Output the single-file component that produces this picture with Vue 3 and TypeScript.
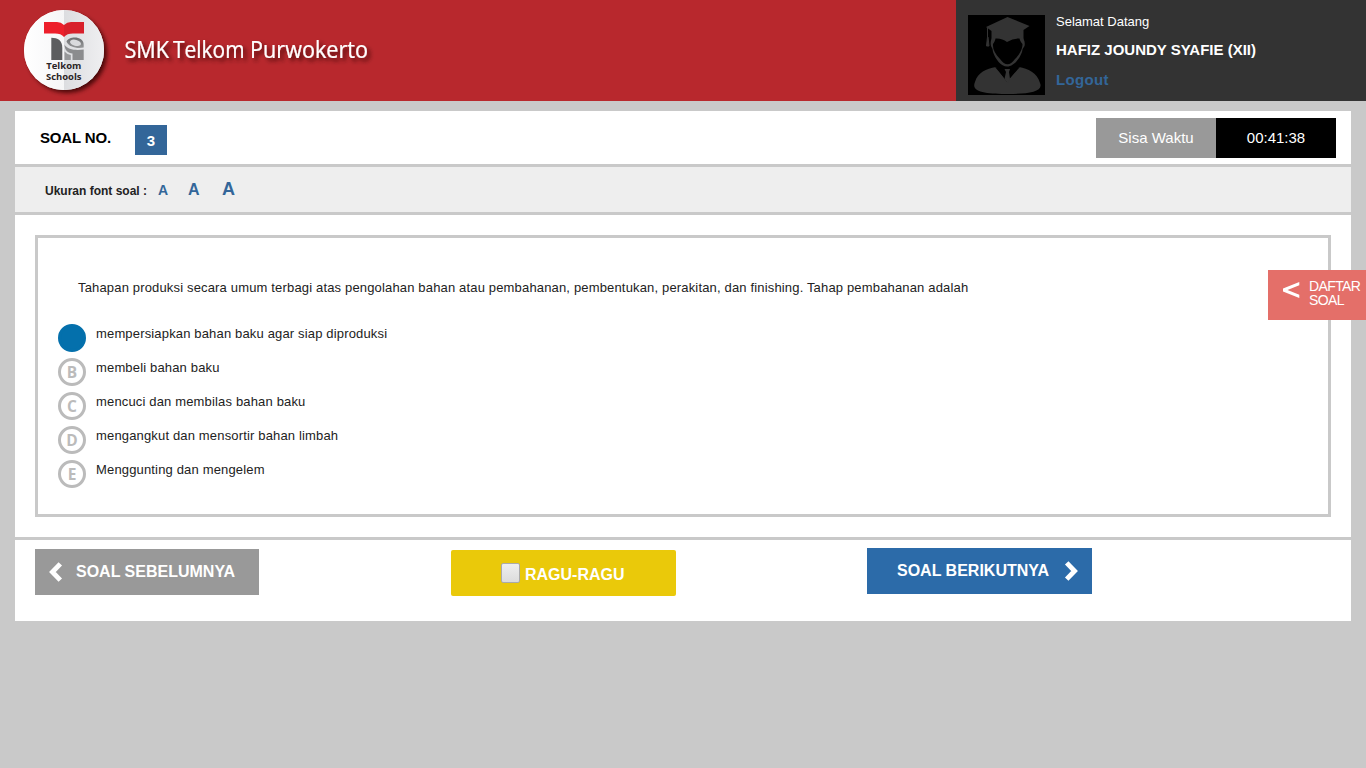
<script setup lang="ts">
import { ref } from 'vue'

interface Option {
  key: string
  text: string
}

const options: Option[] = [
  { key: 'A', text: 'mempersiapkan bahan baku agar siap diproduksi' },
  { key: 'B', text: 'membeli bahan baku' },
  { key: 'C', text: 'mencuci dan membilas bahan baku' },
  { key: 'D', text: 'mengangkut dan mensortir bahan limbah' },
  { key: 'E', text: 'Menggunting dan mengelem' },
]
const selected = ref('A')
const doubtful = ref(false)
</script>

<template>
  <div class="page">
    <header class="header">
      <svg class="brand" width="400" height="101" viewBox="0 0 400 101">
        <defs>
          <filter id="soft" x="-20%" y="-20%" width="150%" height="160%">
            <feDropShadow dx="3" dy="3" stdDeviation="2" flood-color="#300" flood-opacity=".8" />
          </filter>
          <linearGradient id="left" x1="0" x2="1" y1="0" y2="0">
            <stop offset="0" stop-color="#fff" />
            <stop offset="1" stop-color="#f6f6f7" />
          </linearGradient>
          <linearGradient id="right" x1="0" x2="1" y1="0" y2="0">
            <stop offset="0" stop-color="#dcdde0" />
            <stop offset="1" stop-color="#efeff1" />
          </linearGradient>
          <linearGradient id="bowl" x1="0" x2="0" y1="0" y2="1">
            <stop offset="0" stop-color="#6c6d6f" />
            <stop offset="1" stop-color="#98999b" />
          </linearGradient>
        </defs>
        <circle cx="64" cy="50" r="40" fill="#fff" filter="url(#soft)" />
        <path d="M64 10a40 40 0 0 0 0 80z" fill="url(#left)" />
        <path d="M64 10a40 40 0 0 1 0 80z" fill="url(#right)" />
        <path d="M44 22H57Q61 22 64 25V37Q61 33.600 55 33.600H44z" fill="#ed1f2b" />
        <path d="M84 22H71Q67 22 64 25V37Q67 33.600 73 33.600H84z" fill="#d8202b" />
        <path d="M51.300 37.800C58 37.800 62.300 40.500 62.300 48V60H51.300z" fill="#5c5d5f" />
        <path d="M66.500 41.500C69 36 83.700 35.500 83.700 45V47.500C77 49 68.500 47 66.500 41.500z" fill="url(#bowl)" />
        <ellipse cx="75.500" cy="42.800" rx="5.600" ry="3" fill="#d9dadd" transform="rotate(14 75.500 42.800)" />
        <path d="M64.500 44.500C67.500 50 76 50.500 83.700 49.500V60H72.500V53.500C68 53.500 64.500 50 64.500 44.500z" fill="#8b8c8e" />
        <path d="M64.500 51.500Q67 54.500 70.800 55V60H64.500z" fill="#97989a" />
        <text class="logo-text" x="46.300" y="69" textLength="35" lengthAdjust="spacingAndGlyphs">Telkom</text>
        <text class="logo-text" x="46" y="79.700" textLength="35.500" lengthAdjust="spacingAndGlyphs">Schools</text>
        <g class="brand-text" filter="url(#soft)">
          <text x="124.500" y="57.600" textLength="44.500" lengthAdjust="spacingAndGlyphs">SMK</text>
          <text x="173" y="57.600" textLength="71.500" lengthAdjust="spacingAndGlyphs">Telkom</text>
          <text x="250" y="57.600" textLength="118" lengthAdjust="spacingAndGlyphs">Purwokerto</text>
        </g>
      </svg>
      <div class="user">
        <svg class="avatar" width="77" height="80" viewBox="0 0 77 80">
          <rect width="77" height="80" fill="#000" />
          <g fill="#333">
            <path d="M39.500 2L61.500 11 55.500 15V27Q48 22 39 27 30 21 23.500 27V16L18 12z" />
            <path d="M24 23Q22 27 23 31 25 34 25 37C28 45 33 51.500 39 51.500S51 45 54 37Q54 34 56.500 31 57.500 27 55 23z" />
            <path d="M28 52L39 67 51 52C60 54 69 57 72 68 76 77 59 79 40 79S2 78 7 67C10 57 18 54 28 52z" />
          </g>
          <path d="M27.500 23.500Q34 23 39 27 45 23 51.500 23.500C52 26 53.500 28 54.500 29 54.500 35 51 40 47 44 42 51 37 51 32 44 27 39 24.500 34 25 29 26 28 27 26 27.500 23.500z" fill="#000" />
          <path d="M27 52L38 65 39 63 40 65 52 52 42 54H36z" fill="#000" />
          <path d="M36.500 54H42L41 57 42 64 39.500 68 36.500 64 38 57z" fill="#333" />
          <path d="M19.500 12.500V22M19.500 22L18.500 31H21L20 22z" fill="#333" stroke="#333" stroke-width="1" />
        </svg>
        <div class="user-info">
          <span class="welcome">Selamat Datang</span>
          <span class="name">HAFIZ JOUNDY SYAFIE (XII)</span>
          <a class="logout">Logout</a>
        </div>
      </div>
    </header>

    <main class="panel">
      <div class="title-row">
        <span class="title">SOAL NO.</span>
        <span class="number">3</span>
        <div class="timer">
          <span class="timer-label"><span>Sisa Waktu</span></span>
          <span class="timer-value"><span>00:41:38</span></span>
        </div>
      </div>
      <div class="font-row">
        <span class="font-label">Ukuran font soal :</span>
        <a class="fs small">A</a>
        <a class="fs medium">A</a>
        <a class="fs large">A</a>
      </div>
      <section class="body">
        <div class="box">
          <p class="question"><span>Tahapan produksi secara umum terbagi atas pengolahan bahan atau pembahanan, pembentukan, perakitan, dan finishing. Tahap pembahanan adalah</span></p>
          <ul class="options">
            <li v-for="o in options" :key="o.key" @click="selected = o.key">
              <span class="bullet" :class="{ on: selected === o.key }">{{ selected === o.key ? '' : o.key }}</span>
              <span class="option-text">{{ o.text }}</span>
            </li>
          </ul>
        </div>
      </section>
      <footer class="actions">
        <button class="btn prev">
          <svg width="14" height="20" viewBox="0 0 14 20"><path d="M11.300 1.800L3.400 10l7.900 8.200" fill="none" stroke="#fff" stroke-width="4.800" /></svg>
          <span>SOAL SEBELUMNYA</span>
        </button>
        <button class="btn doubt" @click="doubtful = !doubtful">
          <i class="check"><b v-if="doubtful">✓</b></i>
          <span>RAGU-RAGU</span>
        </button>
        <button class="btn next">
          <span>SOAL BERIKUTNYA</span>
          <svg width="14" height="20" viewBox="0 0 14 20"><path d="M2.700 1.800L10.600 10l-7.900 8.200" fill="none" stroke="#fff" stroke-width="4.800" /></svg>
        </button>
      </footer>
    </main>

    <aside class="drawer">
      <svg width="18" height="18" viewBox="0 0 18 18"><path d="M17.300 1v3.300L5.500 9l11.800 4.700V17L1 10.400V7.600z" fill="#fff" /></svg>
      <span class="drawer-text">DAFTAR<br />SOAL</span>
    </aside>
  </div>
</template>

<style>
body {
  margin: 0;
  background: #c9c9c9;
  overflow: hidden;
}
</style>

<style scoped>
.page {
  position: relative;
  width: 1366px;
  height: 768px;
  background: #c9c9c9;
  font-family: "Liberation Sans", Arial, sans-serif;
  white-space: nowrap;
}
.header {
  display: flex;
  justify-content: space-between;
  height: 101px;
  background: #b8282d;
}
.brand-text {
  font: 23px "Open Sans", "Noto Sans", sans-serif;
  fill: #fff;
  stroke: #fff;
  stroke-width: .2px;
}
.logo-text {
  font: bold 9.500px "Open Sans", sans-serif;
  fill: #2b2526;
}
.user {
  display: flex;
  box-sizing: border-box;
  width: 410px;
  padding: 15px 0 0 12px;
  background: #333;
}
.user-info {
  display: flex;
  flex-direction: column;
  align-items: flex-start;
  margin-left: 11px;
  color: #fff;
}
.welcome {
  margin-top: -1px;
  font-size: 13px;
  line-height: 16px;
}
.name {
  margin-top: 11px;
  font-size: 15px;
  font-weight: bold;
  line-height: 18px;
}
.logout {
  margin-top: 12px;
  font-size: 15px;
  font-weight: bold;
  line-height: 18px;
  letter-spacing: .35px;
  color: #369;
}
.panel {
  box-sizing: border-box;
  height: 510px;
  margin: 10px 15px 0;
  background: #fff;
}
.title-row {
  display: flex;
  height: 53px;
  padding: 0 15px 0 25px;
  border-bottom: 3px solid #c9c9c9;
}
.title {
  width: 95px;
  margin-top: 18px;
  font-size: 15px;
  font-weight: bold;
  line-height: 18px;
  letter-spacing: -.15px;
}
.number {
  width: 32px;
  height: 30px;
  margin-top: 14px;
  background: #369;
  color: #fff;
  font-size: 15px;
  font-weight: bold;
  line-height: 32px;
  text-align: center;
}
.timer {
  display: flex;
  height: 40px;
  margin: 7px 0 0 auto;
  color: #fff;
  font-size: 15px;
  line-height: 40px;
  text-align: center;
}
.timer-label {
  width: 120px;
  background: #999;
}
.timer-value {
  width: 120px;
  background: #000;
}
.font-row {
  display: flex;
  align-items: baseline;
  height: 45px;
  padding-left: 30px;
  background: #eee;
  border-bottom: 3px solid #c9c9c9;
  line-height: 45px;
}
.font-label {
  width: 113px;
  font-size: 12px;
  font-weight: bold;
  color: #222;
}
.fs {
  color: #369;
  font-weight: bold;
}
.small {
  width: 30px;
  font-size: 14px;
}
.medium {
  width: 34px;
  font-size: 16px;
}
.large {
  font-size: 18px;
}
.body {
  height: 282px;
  padding: 20px;
  border-bottom: 3px solid #c9c9c9;
}
.box {
  box-sizing: border-box;
  height: 282px;
  padding: 41px 20px 0;
  border: 3px solid #c9c9c9;
}
.question {
  margin: 0 0 29px 20px;
  font-size: 13px;
  line-height: 17px;
  letter-spacing: .163px;
  color: #222;
}
.options {
  margin: 0;
  padding: 0;
  list-style: none;
}
.options li {
  display: flex;
  height: 34px;
}
.bullet {
  box-sizing: border-box;
  width: 28px;
  height: 28px;
  margin-top: -1px;
  border: 3px solid #bbb;
  border-radius: 50%;
  font: bold 15.500px/22px "Open Sans", sans-serif;
  color: #bbb;
  text-align: center;
}
.bullet.on {
  border-color: #0470ac;
  background: #0470ac;
}
.option-text {
  margin-left: 10px;
  font-size: 13px;
  line-height: 17px;
  letter-spacing: .16px;
  color: #222;
}
.actions {
  display: flex;
  align-items: flex-start;
  padding: 8px 20px 0;
}
.btn {
  display: flex;
  align-items: center;
  box-sizing: border-box;
  height: 46px;
  padding: 0;
  border: 0;
  color: #fff;
  font: bold 16px "Liberation Sans", Arial, sans-serif;
}
.prev {
  width: 224px;
  margin-top: 1px;
  padding-left: 14px;
  background: #999;
}
.prev span {
  margin: 0 0 0 13px;
}
.doubt {
  width: 225px;
  margin: 2px 0 0 192px;
  padding-left: 50px;
  border-radius: 2px;
  background: #eac90a;
}
.doubt span {
  margin: 4px 0 0 5px;
}
.check {
  box-sizing: border-box;
  width: 19px;
  height: 20px;
  border: 1px solid #aaa;
  border-radius: 2px;
  background: linear-gradient(#eee, #dcdcdc);
  color: #333;
  line-height: 17px;
}
.next {
  width: 225px;
  margin-left: 191px;
  padding-left: 30px;
  background: #2c6ba9;
}
.next span {
  margin: -1px 15px 0 0;
}
.drawer {
  position: absolute;
  top: 270px;
  right: 0;
  display: flex;
  box-sizing: border-box;
  width: 98px;
  height: 50px;
  padding: 11px 0 0 14px;
  background: #e46f69;
  color: #fff;
}
.drawer-text {
  margin: -2px 0 0 9px;
  font-size: 14px;
  line-height: 14px;
  letter-spacing: -.6px;
}
</style>
